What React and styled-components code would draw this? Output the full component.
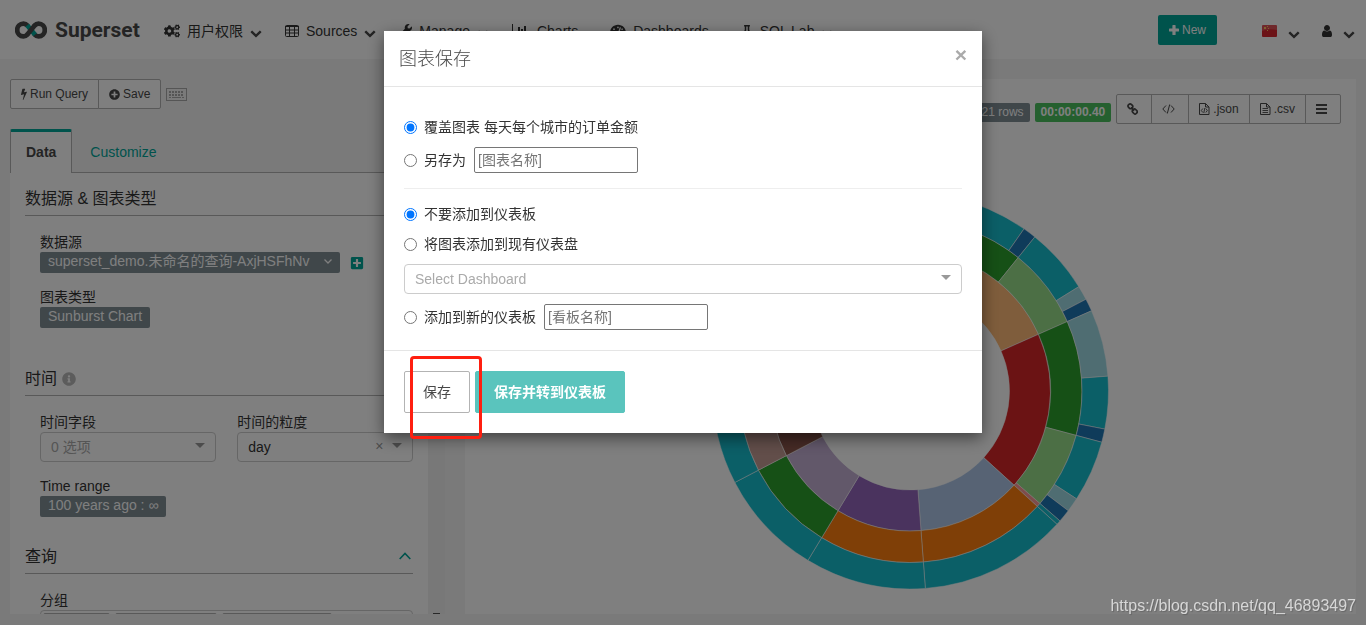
import styled, { createGlobalStyle } from "styled-components";
import {
  FaCogs,
  FaFlask,
  FaInfoCircle,
  FaPlusCircle,
  FaPlusSquare,
  FaTachometerAlt,
  FaWrench,
} from "react-icons/fa";

const GlobalStyle = createGlobalStyle`
  *, *::before, *::after {
    box-sizing: border-box;
  }

  body {
    margin: 0;
    background: #f5f5f5;
    color: #333;
    font-family: "Liberation Sans", "Noto Sans CJK SC", sans-serif;
    font-size: 14px;
    line-height: 20px;
  }

  button, input, select {
    font-family: inherit;
  }

  a {
    color: inherit;
    text-decoration: none;
  }

  svg {
    flex: none;
  }
`;

const Page = styled.div`
  display: flex;
  flex-direction: column;
  height: 100vh;
  overflow: hidden;
`;

const Navbar = styled.nav`
  display: flex;
  align-items: center;
  flex: none;
  height: 59px;
  padding: 0 11px 0 15px;
  background: #fff;
`;

const Brand = styled.a`
  display: flex;
  align-items: center;
  gap: 8px;
  width: 149px;
  color: #484848;
  font-family: Roboto, sans-serif;
  font-size: 21px;
  font-weight: 700;
`;

const NavLink = styled.a`
  display: flex;
  align-items: center;
  gap: 7px;
  padding-top: 2px;
  margin-right: ${(props) => (props.$menu ? "23px" : "32px")};
  white-space: nowrap;
`;

const CaretIcon = styled.svg`
  margin-top: 5px;
`;

const NavRight = styled.div`
  display: flex;
  align-items: center;
  margin-left: auto;
`;

const NewButton = styled.button`
  display: flex;
  align-items: center;
  justify-content: center;
  gap: 3px;
  width: 59px;
  height: 30px;
  margin-right: 45px;
  padding: 0;
  border: 0;
  border-radius: 2px;
  background: #00a699;
  color: #fff;
  font-size: 12px;
`;

const IconMenu = styled.a`
  display: flex;
  align-items: center;
  gap: 11px;
  margin-left: 22px;
  padding-top: 3px;

  &:first-of-type {
    margin-left: 0;
  }
`;

const Main = styled.main`
  display: grid;
  grid-template-columns: 1fr 2fr;
  flex: 1;
  min-height: 0;
  padding: 20px 0 11px;
`;

const LeftColumn = styled.div`
  display: flex;
  flex-direction: column;
  min-height: 0;
  padding: 0 10px;
`;

const Toolbar = styled.div`
  display: flex;
  align-items: center;
  gap: 5px;
  color: #aaa;
`;

const ButtonGroup = styled.div`
  display: flex;
`;

const ToolButton = styled.button`
  display: flex;
  align-items: center;
  gap: 3px;
  height: 30px;
  margin-left: -1px;
  padding: 0 ${(props) => (props.$iconOnly ? "13px" : "10px")} 0 10px;
  border: 1px solid #b3b3b3;
  background: #fff;
  color: #484848;
  font-size: 12px;

  &:first-child {
    margin-left: 0;
    border-radius: 2px 0 0 2px;
  }

  &:last-child {
    border-radius: 0 2px 2px 0;
  }
`;

const Tabs = styled.div`
  display: flex;
  flex: none;
  height: 44px;
  margin-top: 20px;
  box-shadow: inset 0 -1px #b3b3b3;
`;

const Tab = styled.button`
  padding: 0 ${(props) => (props.$active ? "15px" : "17px")} 1px;
  border: 1px solid ${(props) => (props.$active ? "#b3b3b3" : "transparent")};
  border-top: 3px solid ${(props) => (props.$active ? "#00a699" : "transparent")};
  border-bottom: 0;
  border-radius: 2px 2px 0 0;
  background: ${(props) => (props.$active ? "#fff" : "transparent")};
  color: ${(props) => (props.$active ? "#484848" : "#00a699")};
  font-size: 14px;
  font-weight: ${(props) => (props.$active ? 700 : 400)};
`;

const Scroller = styled.div`
  display: flex;
  flex: 1;
  min-height: 0;
  overflow: hidden;
`;

const Controls = styled.div`
  flex: 1;
  padding: 0 15px;
  background: #fff;
`;

const ScrollTrack = styled.div`
  display: flex;
  align-items: flex-end;
  justify-content: center;
  width: 17px;
  background: #f1f1f1;

  &::after {
    width: 7px;
    height: 1px;
    background: #505050;
    content: "";
  }
`;

const Section = styled.section`
  padding-top: 15px;
  padding-bottom: ${(props) => props.$space}px;
`;

const SectionTitle = styled.h2`
  display: flex;
  align-items: center;
  gap: 5px;
  height: 28px;
  margin: 0 0 16px;
  padding: 1px 0 6px;
  border-bottom: 1px solid #b3b3b3;
  font-size: 16px;
  font-weight: 400;
`;

const InfoIcon = styled(FaInfoCircle)`
  color: #b8b8b8;
  font-size: 14px;
`;

const Collapse = styled.button`
  display: flex;
  margin-left: auto;
  padding: 0 2px 2px;
  border: 0;
  background: none;
`;

const Fields = styled.div`
  display: grid;
  grid-template-columns: ${(props) => (props.$split ? "1fr 1fr" : "1fr")};
  gap: 14px 21px;
  margin-bottom: 14px;
  padding-left: 15px;
`;

const FieldLabel = styled.label`
  display: block;
  height: 20px;
`;

const PillRow = styled.div`
  display: flex;
  align-items: center;
  gap: 10px;
  color: #00a699;
`;

const Pill = styled.button`
  display: flex;
  align-items: center;
  gap: 15px;
  height: 21px;
  padding: 0 8px 2px;
  border: 0;
  border-radius: 2px;
  background: #808e95;
  color: #fff;
  font-size: 14px;
  line-height: 19px;
  white-space: nowrap;
`;

const SelectBox = styled.div`
  display: flex;
  align-items: center;
  height: 30px;
  padding: 0 10px;
  border: 1px solid #ccc;
  border-radius: 4px;
  background: #fff;
`;

const Select = styled.select`
  flex: 1;
  min-width: 0;
  height: 28px;
  padding: 0;
  border: 0;
  outline: 0;
  appearance: none;
  background: transparent;
  color: ${(props) => (props.$empty ? "#aaa" : "#333")};
  font-size: 14px;
`;

const SelectArrow = styled.svg`
  margin-bottom: 4px;
`;

const ClearButton = styled.button`
  margin-right: 9px;
  padding: 0 0 2px;
  border: 0;
  background: none;
  color: #999;
  font-size: 14px;
`;

const Tags = styled.div`
  display: flex;
  gap: 5px;
  height: 30px;
  padding: 2px;
  border: 1px solid #ccc;
  border-radius: 4px;
`;

const Tag = styled.span`
  flex: 0 1 ${(props) => props.$width}px;
  height: 24px;
  border: 1px solid #b3b3b3;
  border-radius: 2px;
`;

const RightColumn = styled.div`
  min-width: 0;
  min-height: 0;
  padding: 0 10px;
`;

const ChartPanel = styled.div`
  display: flex;
  flex-direction: column;
  height: 100%;
  padding: 15px 15px 0;
  background: #fff;
`;

const ChartHeader = styled.div`
  display: flex;
  align-items: flex-end;
  justify-content: flex-end;
  gap: 5px;
`;

const Badge = styled.span`
  height: 19px;
  margin-bottom: 2px;
  padding: 0 6px;
  border-radius: 2px;
  background: ${(props) => (props.$success ? "#4ac15f" : "#808e95")};
  color: #fff;
  font-size: 12px;
  font-weight: ${(props) => (props.$success ? 700 : 400)};
  line-height: 18px;
`;

const Chart = styled.svg`
  align-self: center;
  margin-top: 68px;
`;

const Backdrop = styled.div`
  position: fixed;
  inset: 0;
  padding: 31px 20px;
  background: rgba(0, 0, 0, 0.5);
`;

const Dialog = styled.form`
  max-width: 598px;
  margin: 0 auto;
  background: #fff;
  box-shadow: 0 5px 15px rgba(0, 0, 0, 0.5);
`;

const DialogHeader = styled.header`
  display: flex;
  align-items: center;
  justify-content: space-between;
  height: 56px;
  padding: 0 15px;
  border-bottom: 1px solid #e5e5e5;
`;

const DialogTitle = styled.h1`
  margin: 0;
  color: #484848;
  font-size: 18px;
  font-weight: 300;
`;

const CloseButton = styled.button`
  padding: 0 0 8px;
  border: 0;
  background: none;
  color: #aaa;
  font-size: 21px;
  font-weight: 700;
`;

const DialogBody = styled.div`
  display: flex;
  flex-direction: column;
  gap: 10px;
  padding: 30px 20px 20px;
`;

const Option = styled.div`
  display: flex;
  align-items: center;
  gap: 8px;
`;

const RadioLabel = styled.label`
  display: flex;
  align-items: center;
  gap: 7px;
`;

const Radio = styled.input`
  width: 13px;
  height: 13px;
  margin: 0;
`;

const NameInput = styled.input`
  width: 164px;
  height: 26px;
  padding: 0 3px;
  border: 1px solid #767676;
  border-radius: 2px;
  font-size: 14px;

  &::placeholder {
    color: #757575;
  }
`;

const Divider = styled.hr`
  width: 100%;
  margin: 5px 0;
  border: 0;
  border-top: 1px solid #eee;
`;

const DialogFooter = styled.footer`
  display: flex;
  gap: 5px;
  padding: 20px;
  border-top: 1px solid #e5e5e5;
`;

const Marked = styled.div`
  position: relative;

  &::after {
    position: absolute;
    top: -15px;
    left: 6px;
    width: 72px;
    height: 83px;
    border: 3px solid #ff1f10;
    border-radius: 4px;
    pointer-events: none;
    content: "";
  }
`;

const DialogButton = styled.button`
  height: 42px;
  padding: 0 18px 2px;
  border: 1px solid ${(props) => (props.$primary ? "#5ac4bd" : "#b3b3b3")};
  border-radius: 2px;
  background: ${(props) => (props.$primary ? "#5ac4bd" : "#fff")};
  color: ${(props) => (props.$primary ? "#fff" : "#484848")};
  font-size: 14px;
  font-weight: ${(props) => (props.$primary ? 700 : 400)};
`;

const Watermark = styled.div`
  position: fixed;
  right: 10px;
  bottom: 9px;
  color: rgba(255, 255, 255, 0.7);
  font-size: 16px;
  text-shadow: 1px 1px 1px rgba(0, 0, 0, 0.2);
`;

// radii of the three rings, from the hole outwards
const R = [99, 140, 171.5, 198];

// [ring, start, end, colour], angles clockwise from noon
const arcs = [
  [0, -60, 66.1, "#ffbb78"],
  [0, 66.1, 132.3, "#d62728"],
  [0, 132.3, 175.7, "#aec7e8"],
  [0, 175.7, 211.2, "#9467bd"],
  [0, 211.2, 242.5, "#c5b0d5"],
  [0, 242.5, 300, "#8c564b"],
  [1, -60, 38.9, "#2ca02c"],
  [1, 38.9, 66.1, "#98df8a"],
  [1, 66.1, 105, "#2ca02c"],
  [1, 105, 131, "#98df8a"],
  [1, 131, 132.3, "#ff9896"],
  [1, 132.3, 175.7, "#ff7f0e"],
  [1, 175.7, 211.2, "#ff7f0e"],
  [1, 211.2, 242.5, "#2ca02c"],
  [1, 242.5, 300, "#c49c94"],
  [2, -60, 35, "#17becf"],
  [2, 35, 38.9, "#1f77b4"],
  [2, 38.9, 58.2, "#17becf"],
  [2, 58.2, 62.4, "#9edae5"],
  [2, 62.4, 66.1, "#1f77b4"],
  [2, 66.1, 85.7, "#9edae5"],
  [2, 85.7, 101.1, "#17becf"],
  [2, 101.1, 105, "#1f77b4"],
  [2, 105, 123, "#17becf"],
  [2, 123, 127.2, "#9edae5"],
  [2, 127.2, 131, "#1f77b4"],
  [2, 131, 132.3, "#17becf"],
  [2, 132.3, 175.7, "#17becf"],
  [2, 175.7, 211.2, "#17becf"],
  [2, 211.2, 242.5, "#17becf"],
  [2, 242.5, 300, "#17becf"],
];

function point(radius, degrees) {
  const a = (degrees * Math.PI) / 180;
  return `${radius * Math.sin(a)} ${-radius * Math.cos(a)}`;
}

function arcPath([ring, from, to]) {
  const inner = R[ring];
  const outer = R[ring + 1];
  const large = to - from > 180 ? 1 : 0;
  return `M${point(outer, from)}A${outer} ${outer} 0 ${large} 1 ${point(outer, to)}L${point(inner, to)}A${inner} ${inner} 0 ${large} 0 ${point(inner, from)}Z`;
}

function Sunburst() {
  return (
    <Chart width="398" height="398" viewBox="-198.5 -199 398 398">
      {arcs.map((arc) => (
        <path key={arc.join()} d={arcPath(arc)} fill={arc[3]} stroke="#fff" strokeOpacity="0.5" />
      ))}
    </Chart>
  );
}

function Logo() {
  return (
    <svg width="32" height="18" viewBox="0 0 31 17" fill="none" strokeWidth="4.6">
      <path
        stroke="#484848"
        d="M12.5 4.6C11 3 9.8 2.4 8.2 2.4a6.1 6.1 0 0 0 0 12.2c1.6 0 2.8-.6 4.3-2.2M18.5 4.6C20 3 21.2 2.4 22.8 2.4a6.1 6.1 0 0 1 0 12.2c-1.6 0-2.8-.6-4.3-2.2"
      />
      <path stroke="#00a699" d="M11.8 3.8l7.6 9.4" />
      <path stroke="#484848" d="M11.6 13.3l7.8-9.6" />
    </svg>
  );
}

function Caret() {
  return (
    <CaretIcon width="12" height="12" viewBox="0 0 1792 1792">
      <path
        fill="#484848"
        d="M1683 808l-742 741q-19 19-45 19t-45-19l-742-741q-19-19-19-45.500t19-45.500l166-165q19-19 45-19t45 19l531 531 531-531q19-19 45-19t45 19l166 165q19 19 19 45.500t-19 45.500z"
      />
    </CaretIcon>
  );
}

function TableIcon() {
  return (
    <svg width="14" height="12" viewBox="0 0 14 12" fill="none" stroke="currentColor">
      <rect x=".5" y=".5" width="13" height="11" rx="1" />
      <path d="M0 1.500h14M0 5h14M0 8h14M4.500 2v10M9.500 2v10" />
    </svg>
  );
}

function ChartIcon() {
  return (
    <svg width="18" height="14" viewBox="0 0 18 14">
      <path fill="currentColor" d="M0 0h1v12h16v1H0zM3 7h2v4H3zM6 3h2v8H6zM9 5h2v6H9zM12 2h2v9h-2z" />
    </svg>
  );
}

function KeyboardIcon() {
  return (
    <svg width="21" height="13" viewBox="0 0 21 13" fill="none" stroke="currentColor">
      <rect x=".5" y=".5" width="20" height="12" />
      <path strokeWidth="2" strokeDasharray="2 1" d="M3 4h15M3 7h15" />
      <path d="M3 9.500h2M6 9.500h9M16 9.500h2" />
    </svg>
  );
}

function BoltIcon() {
  return (
    <svg width="6" height="12" viewBox="448 0 896 1792">
      <path
        fill="currentColor"
        d="M1333 566q18 20 7 44l-540 1157q-13 25-42 25-4 0-14-2-17-5-25.500-19t-4.500-30l197-808-406 101q-4 1-12 1-18 0-31-11-18-15-13-39l201-825q4-16 16-26t28-10h328q19 0 32 12.500t13 29.500q0 8-5 18l-171 463 396-98q8-2 12-2 19 0 34 15z"
      />
    </svg>
  );
}

function PlusIcon() {
  return (
    <svg width="10" height="10" viewBox="0 0 10 10">
      <path fill="currentColor" d="M4 0h2q.6 0 .6.600v2.800h2.800q.6 0 .6.600v2q0 .6-.6.600H6.600v2.800q0 .6-.6.600H4q-.6 0-.6-.6V6.600H.6Q0 6.600 0 6V4q0-.6.600-.6h2.800V.600Q3.400 0 4 0z" />
    </svg>
  );
}

function UserIcon() {
  return (
    <svg width="10" height="12" viewBox="256 128 1280 1536">
      <path
        fill="currentColor"
        d="M1536 1399q0 109-62.500 187t-150.500 78h-854q-88 0-150.500-78t-62.500-187q0-85 8.500-160.500t31.500-152 58.500-131 94-89 134.500-34.500q131 128 313 128t313-128q76 0 134.500 34.500t94 89 58.500 131 31.500 152 8.500 160.500zm-256-887q0 159-112.500 271.500t-271.500 112.500-271.500-112.500-112.500-271.500 112.500-271.500 271.500-112.500 271.500 112.500 112.500 271.500z"
      />
    </svg>
  );
}

function LinkIcon() {
  return (
    <svg width="11" height="12" viewBox="0 0 11 12" fill="none" stroke="currentColor" strokeWidth="1.7">
      <rect x="1" y="1.300" width="4.800" height="4" rx="1.600" transform="rotate(45 3.400 3.300)" />
      <rect x="5.400" y="6.500" width="4.800" height="4" rx="1.600" transform="rotate(45 7.800 8.500)" />
      <path d="M4 4.300l3.200 3.300" />
    </svg>
  );
}

function CodeIcon() {
  return (
    <svg width="13" height="10" viewBox="0 0 13 10" fill="none" stroke="currentColor">
      <path d="M4 1.500L.8 5 4 8.500M9 1.500L12.200 5 9 8.500M7.700.5L5.300 9.500" />
    </svg>
  );
}

function FileIcon({ code }) {
  return (
    <svg width="11" height="12" viewBox="0 0 11 12" fill="none" stroke="currentColor">
      <path d="M.5.500h6l3.500 3.500v7.500H.5zM6.500.500v3.500H10" />
      <path
        strokeWidth=".9"
        d={code ? "M3.800 5.500L2.300 7.500l1.500 2M6.800 5.500l1.500 2-1.500 2M5.800 5l-1 5" : "M2.500 5.500h5.500M2.500 7.500h5.500M2.500 9.500h5.500"}
      />
    </svg>
  );
}

function FlagIcon() {
  return (
    <svg width="15" height="12" viewBox="0 0 15 12">
      <rect width="15" height="12" rx="1" fill="#d8262e" />
      <path fill="#fff" fillOpacity=".2" d="M0 0h15v5Q7 3 0 6z" />
      <path fill="#ffc45c" d="M2 2h2v2H2zM5 1h1v1H5zM6 3h1v1H6zM5 5h1v1H5z" />
    </svg>
  );
}

function Arrow() {
  return (
    <SelectArrow width="10" height="5" viewBox="0 0 10 5">
      <path fill="#999" d="M0 0h10L5 5z" />
    </SelectArrow>
  );
}

function MenuIcon() {
  return (
    <svg width="11" height="10" viewBox="0 0 11 10">
      <path fill="currentColor" d="M0 0h11v2H0zM0 4h11v2H0zM0 8h11v2H0z" />
    </svg>
  );
}

function Header() {
  return (
    <Navbar>
      <Brand href="#home">
        <Logo />
        Superset
      </Brand>
      <NavLink href="#security" $menu>
        <FaCogs size={16} />
        用户权限
        <Caret />
      </NavLink>
      <NavLink href="#sources" $menu>
        <TableIcon />
        Sources
        <Caret />
      </NavLink>
      <NavLink href="#manage" $menu>
        <FaWrench size={13} />
        Manage
        <Caret />
      </NavLink>
      <NavLink href="#charts">
        <ChartIcon />
        Charts
      </NavLink>
      <NavLink href="#dashboards">
        <FaTachometerAlt size={16} />
        Dashboards
      </NavLink>
      <NavLink href="#sqllab" $menu>
        <FaFlask size={12} />
        SQL Lab
        <Caret />
      </NavLink>
      <NavRight>
        <NewButton type="button">
          <PlusIcon />
          New
        </NewButton>
        <IconMenu href="#language" aria-label="Language">
          <FlagIcon />
          <Caret />
        </IconMenu>
        <IconMenu href="#user" aria-label="User">
          <UserIcon />
          <Caret />
        </IconMenu>
      </NavRight>
    </Navbar>
  );
}

function ControlPanel() {
  return (
    <LeftColumn>
      <Toolbar>
        <ButtonGroup>
          <ToolButton type="button">
            <BoltIcon />
            Run Query
          </ToolButton>
          <ToolButton type="button">
            <FaPlusCircle size={11} />
            Save
          </ToolButton>
        </ButtonGroup>
        <KeyboardIcon />
      </Toolbar>
      <Tabs>
        <Tab type="button" $active>
          Data
        </Tab>
        <Tab type="button">Customize</Tab>
      </Tabs>
      <Scroller>
        <Controls>
          <Section $space={11}>
            <SectionTitle>数据源 & 图表类型</SectionTitle>
            <Fields>
              <div>
                <FieldLabel htmlFor="datasource">数据源</FieldLabel>
                <PillRow>
                  <Pill type="button" id="datasource">
                    superset_demo.未命名的查询-AxjHSFhNv
                    <svg width="8" height="5" viewBox="0 0 8 5" fill="none">
                      <path stroke="#fff" strokeWidth="1.3" d="M.5.500L4 4 7.500.500" />
                    </svg>
                  </Pill>
                  <FaPlusSquare size={14} />
                </PillRow>
              </div>
              <div>
                <FieldLabel htmlFor="viz">图表类型</FieldLabel>
                <Pill type="button" id="viz">
                  Sunburst Chart
                </Pill>
              </div>
            </Fields>
          </Section>
          <Section $space={0}>
            <SectionTitle>
              时间
              <InfoIcon />
            </SectionTitle>
            <Fields $split>
              <div>
                <FieldLabel htmlFor="column">时间字段</FieldLabel>
                <SelectBox>
                  <Select id="column" $empty>
                    <option>0 选项</option>
                  </Select>
                  <Arrow />
                </SelectBox>
              </div>
              <div>
                <FieldLabel htmlFor="grain">时间的粒度</FieldLabel>
                <SelectBox>
                  <Select id="grain">
                    <option>day</option>
                  </Select>
                  <ClearButton type="button">×</ClearButton>
                  <Arrow />
                </SelectBox>
              </div>
              <div>
                <FieldLabel htmlFor="range">Time range</FieldLabel>
                <Pill type="button" id="range">
                  100 years ago : ∞
                </Pill>
              </div>
            </Fields>
          </Section>
          <Section $space={0}>
            <SectionTitle>
              查询
              <Collapse type="button" aria-label="Collapse">
                <svg width="12" height="8" viewBox="0 0 12 8" fill="none">
                  <path stroke="#00a699" strokeWidth="1.6" d="M.7 7L6 1.500 11.300 7" />
                </svg>
              </Collapse>
            </SectionTitle>
            <Fields>
              <div>
                <FieldLabel>分组</FieldLabel>
                <Tags>
                  <Tag $width={67} />
                  <Tag $width={102} />
                  <Tag $width={110} />
                </Tags>
              </div>
            </Fields>
          </Section>
        </Controls>
        <ScrollTrack />
      </Scroller>
    </LeftColumn>
  );
}

function SaveDialog() {
  return (
    <Backdrop>
      <Dialog role="dialog" aria-labelledby="save-title">
        <DialogHeader>
          <DialogTitle id="save-title">图表保存</DialogTitle>
          <CloseButton type="button" aria-label="Close">
            ×
          </CloseButton>
        </DialogHeader>
        <DialogBody>
          <RadioLabel>
            <Radio type="radio" name="action" defaultChecked />
            覆盖图表 每天每个城市的订单金额
          </RadioLabel>
          <Option>
            <RadioLabel>
              <Radio type="radio" name="action" />
              另存为
            </RadioLabel>
            <NameInput placeholder="[图表名称]" aria-label="图表名称" />
          </Option>
          <Divider />
          <RadioLabel>
            <Radio type="radio" name="dashboard" defaultChecked />
            不要添加到仪表板
          </RadioLabel>
          <RadioLabel>
            <Radio type="radio" name="dashboard" />
            将图表添加到现有仪表盘
          </RadioLabel>
          <SelectBox>
            <Select $empty aria-label="Select Dashboard">
              <option>Select Dashboard</option>
            </Select>
            <Arrow />
          </SelectBox>
          <Option>
            <RadioLabel>
              <Radio type="radio" name="dashboard" />
              添加到新的仪表板
            </RadioLabel>
            <NameInput placeholder="[看板名称]" aria-label="看板名称" />
          </Option>
        </DialogBody>
        <DialogFooter>
          <Marked>
            <DialogButton type="button">保存</DialogButton>
          </Marked>
          <DialogButton type="button" $primary>
            保存并转到仪表板
          </DialogButton>
        </DialogFooter>
      </Dialog>
    </Backdrop>
  );
}

function App() {
  return (
    <>
      <GlobalStyle />
      <Page>
        <Header />
        <Main>
          <ControlPanel />
          <RightColumn>
            <ChartPanel>
              <ChartHeader>
                <Badge>21 rows</Badge>
                <Badge $success>00:00:00.40</Badge>
                <ButtonGroup>
                  <ToolButton type="button" aria-label="Link" $iconOnly>
                    <LinkIcon />
                  </ToolButton>
                  <ToolButton type="button" aria-label="Embed" $iconOnly>
                    <CodeIcon />
                  </ToolButton>
                  <ToolButton type="button">
                    <FileIcon code />
                    .json
                  </ToolButton>
                  <ToolButton type="button">
                    <FileIcon />
                    .csv
                  </ToolButton>
                  <ToolButton type="button" aria-label="Menu" $iconOnly>
                    <MenuIcon />
                  </ToolButton>
                </ButtonGroup>
              </ChartHeader>
              <Sunburst />
            </ChartPanel>
          </RightColumn>
        </Main>
      </Page>
      <SaveDialog />
      <Watermark>https://blog.csdn.net/qq_46893497</Watermark>
    </>
  );
}

export default App;
